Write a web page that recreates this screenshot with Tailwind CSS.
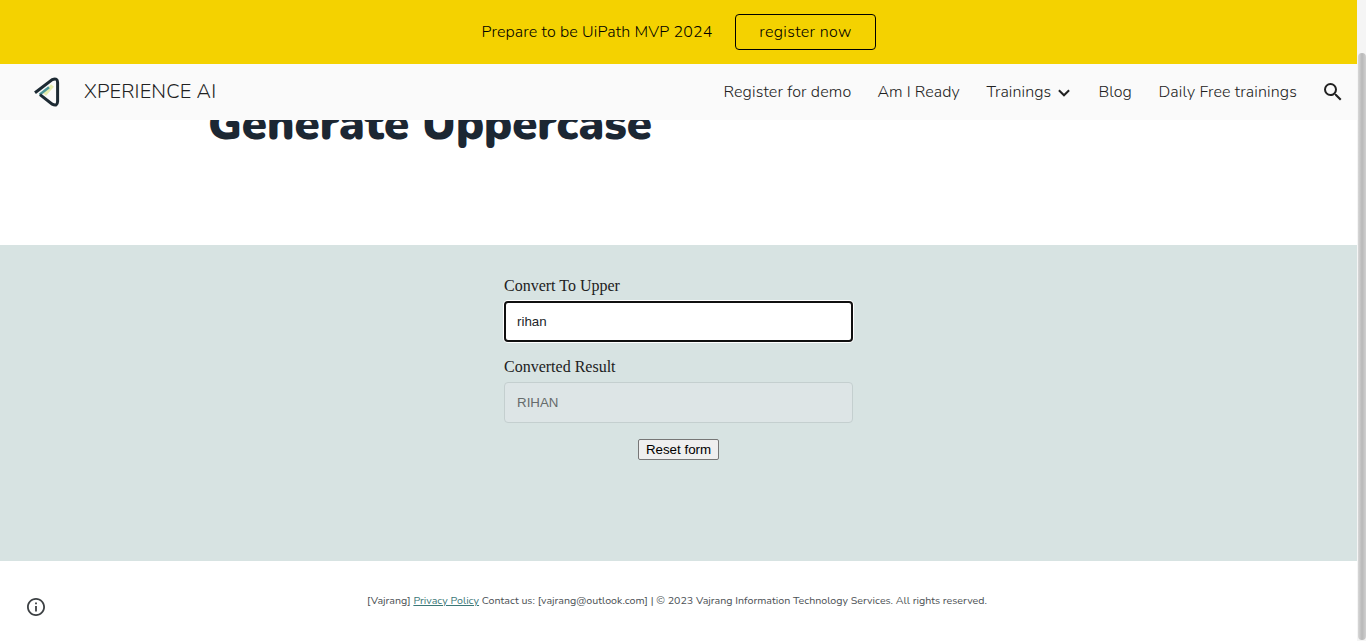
<!DOCTYPE html>
<html lang="en">
<head>
<meta charset="utf-8">
<title>XPERIENCE AI - Generate Uppercase</title>
<script src="https://cdn.jsdelivr.net/npm/@tailwindcss/browser@4"></script>
</head>
<body class="flex h-[641px] w-[1366px] overflow-hidden bg-white font-[Nunito,'Noto_Sans',sans-serif] text-[#212121]">
<div class="flex h-full w-[1357px] flex-col">
  <div class="flex h-16 shrink-0 items-center bg-[#f4d200] pl-[481.5px] text-base font-light text-black">
    <span class="w-[253.5px] whitespace-nowrap tracking-[0.13px]">Prepare to be UiPath MVP 2024</span>
    <a class="flex h-9 w-[141px] items-center justify-center rounded-[4px] border border-black tracking-[0.34px]">register now</a>
  </div>
  <header class="flex h-14 shrink-0 items-center bg-[#fafafa] pl-8">
    <svg class="h-8 w-8 shrink-0" viewBox="0 0 32 32" fill="none">
      <path d="M12.5 18.5 20.5 9.5" stroke="#e6ecae" stroke-width="4"/>
      <path d="M7.5 18.8 17 11.2" stroke="#4d9698" stroke-width="2.4"/>
      <path d="M3 16.8 20.3 3.6Q25.6 1.4 25.6 6.6V25.4Q25.4 30.8 20.2 28.2L8 18.6" stroke="#1d2a33" stroke-width="3"/>
    </svg>
    <span class="ml-5 w-[639.5px] whitespace-nowrap text-xl font-light tracking-[0.15px]">XPERIENCE AI</span>
    <nav class="flex items-center whitespace-nowrap text-base font-light">
      <a class="w-[154px] tracking-[0.14px]">Register for demo</a>
      <a class="w-[109px] tracking-[0.05px]">Am I Ready</a>
      <a class="flex w-[112px] items-center"><span class="w-[71px] tracking-[0.1px]">Trainings</span>
        <svg class="mt-0.5 h-3 w-3" viewBox="0 0 12 12" fill="none" stroke="#212121" stroke-width="2"><path d="m.9 3.2 5.1 5.1 5.1-5.1"/></svg>
      </a>
      <a class="w-[60px]">Blog</a>
      <a class="w-[162.5px] tracking-[0.12px]">Daily Free trainings</a>
    </nav>
    <svg class="h-6 w-6 shrink-0" viewBox="0 0 24 24" fill="#212121"><path d="M15.5 14h-.79l-.28-.27A6.47 6.47 0 0 0 16 9.5 6.5 6.5 0 1 0 9.5 16c1.61 0 3.09-.59 4.23-1.57l.27.28v.79l5 4.99L20.49 19l-4.99-5zm-6 0C7.01 14 5 11.99 5 9.5S7.01 5 9.5 5 14 7.01 14 9.5 11.99 14 9.5 14z"/></svg>
  </header>
  <section class="h-[125px] shrink-0 overflow-hidden pl-[208px]">
    <h1 class="-mt-[26px] whitespace-nowrap text-[45.33px] leading-[60px] font-black text-[#1c2733]">Generate Uppercase</h1>
  </section>
  <main class="flex h-[316px] shrink-0 flex-col bg-[#d7e3e2] pt-[31px] pl-[504px] font-['Liberation_Sans',Arial,sans-serif]">
    <label class="h-[25px] font-['Liberation_Serif',serif] text-base leading-[19px]">Convert To Upper</label>
    <div class="flex h-[41px] w-[349px] items-center rounded-[4px] border-2 border-[#101010] bg-white pl-[11px] text-[13.33px] text-[#212529] shadow-[0_0_0_1px_#fff]">rihan</div>
    <label class="mt-[15px] h-[25px] font-['Liberation_Serif',serif] text-base leading-[19px]">Converted Result</label>
    <div class="flex h-[41px] w-[349px] items-center rounded-[4px] border border-[#c4cfcf] bg-[#dde5e6] pl-3 text-[13.33px] text-[#666b6c]">RIHAN</div>
    <button class="mt-4 ml-[134px] h-[21px] w-[81px] rounded-[2px] border border-[#767676] bg-[#efefef] text-[13.33px] leading-[19px] whitespace-nowrap text-black">Reset form</button>
  </main>
  <footer class="flex h-20 shrink-0">
    <svg class="mt-[37px] ml-[27px] h-[18px] w-[18px] shrink-0" viewBox="2 2 20 20" fill="#3c4043"><path d="M11 17h2v-6h-2v6zm1-15C6.48 2 2 6.48 2 12s4.48 10 10 10 10-4.48 10-10S17.52 2 12 2zm0 18c-4.41 0-8-3.59-8-8s3.59-8 8-8 8 3.59 8 8-3.59 8-8 8zM11 9h2V7h-2v2z"/></svg>
    <p class="mt-[32px] ml-[322px] text-[10.67px] leading-4 whitespace-nowrap text-[#4b5054]">[Vajrang] <a class="text-[#3b7777] underline">Privacy Policy</a> Contact us: [vajrang@outlook.com] | © 2023 Vajrang Information Technology Services. All rights reserved.</p>
  </footer>
</div>
<div class="h-full w-[9px] bg-[#f5f5f5] pt-[53px] pl-px"><div class="h-[587px] w-2 rounded-full bg-linear-to-r from-[#d8d8d8] via-[#b8b8b8] to-[#d0d0d0]"></div></div>
</body>
</html>
